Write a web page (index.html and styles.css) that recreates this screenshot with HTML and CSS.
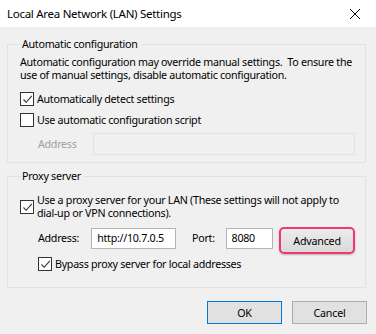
FILE: index.html
```html
<!DOCTYPE html>
<html>
    <head>
        <meta charset="utf-8">
        <title>Local Area Network (LAN) Settings</title>
        <link rel="stylesheet" href="styles.css">
    </head>
    <body>
        <div class="dialog">
            <div class="titlebar">
                <span class="title">Local Area Network (LAN) Settings</span>
                <svg class="close" width="12" height="12" viewBox="0 0 12 12">
                    <path d="M1 1 L11 11 M11 1 L1 11" stroke="#000" stroke-width="1" fill="none"/>
                </svg>
            </div>
            <div class="content">
                <!-- 자동 구성 -->
                <fieldset class="group group-auto">
                    <legend>Automatic configuration</legend>
                    <p class="desc">Automatic configuration may override manual settings.&nbsp; To ensure the<br>use of manual settings, disable automatic configuration.</p>
                    <label class="check row-detect"><span class="box checked"><svg width="11" height="11" viewBox="0 0 11 11"><path d="M1.5 5.5 L4.2 8.3 L9.8 1.8" stroke="#333" stroke-width="1.1" fill="none"/></svg></span>Automatically detect settings</label>
                    <label class="check row-script"><span class="box"></span>Use automatic configuration script</label>
                    <div class="field-row disabled">
                        <span class="field-label">Address</span>
                        <span class="input input-script"></span>
                    </div>
                </fieldset>
                <!-- 프록시 서버 -->
                <fieldset class="group group-proxy">
                    <legend>Proxy server</legend>
                    <label class="check check-multi"><span class="box checked"><svg width="11" height="11" viewBox="0 0 11 11"><path d="M1.5 5.5 L4.2 8.3 L9.8 1.8" stroke="#333" stroke-width="1.1" fill="none"/></svg></span><span>Use a proxy server for your LAN (These settings will not apply to<br>dial-up or VPN connections).</span></label>
                    <div class="proxy-row">
                        <span class="field-label">Address:</span>
                        <span class="input input-address">http://10.7.0.5</span>
                        <span class="field-label port-label">Port:</span>
                        <span class="input input-port">8080</span>
                        <button class="btn btn-advanced">Advanced</button>
                    </div>
                    <label class="check check-bypass"><span class="box checked"><svg width="11" height="11" viewBox="0 0 11 11"><path d="M1.5 5.5 L4.2 8.3 L9.8 1.8" stroke="#333" stroke-width="1.1" fill="none"/></svg></span>Bypass proxy server for local addresses</label>
                </fieldset>
                <div class="actions">
                    <button class="btn btn-ok">OK</button>
                    <button class="btn">Cancel</button>
                </div>
            </div>
        </div>
    </body>
</html>
```
FILE: styles.css
```css
body {
    margin: 0;
    font-family: "Noto Sans", "Open Sans", sans-serif;
    font-size: 10.7px;
    letter-spacing: -0.28px;
    color: #000;
    white-space: nowrap;
}
.dialog {
    width: 376px;
    height: 334px;
    background: #f0f0f0;
    overflow: hidden;
}
.titlebar {
    height: 27px;
    background: #fff;
    display: flex;
    align-items: center;
    justify-content: space-between;
    padding: 0 15px 0 7px;
    font-size: 11.5px;
    letter-spacing: -0.28px;
}
.close {
    margin-top: 1px;
}
.content {
    padding: 11px 10px 0 7px;
}
.group {
    margin: 0;
    border: 1px solid #e2e2e2;
    padding: 5px 10px 7px 12px;
    line-height: 13px;
    min-width: 0;
}
.group legend {
    padding: 0 3px 0 1px;
    margin-left: 1px;
    line-height: 13px;
}
.desc {
    margin: 0;
}
.check {
    display: flex;
    align-items: center;
    height: 14px;
}
.row-detect {
    margin-top: 10px;
}
.row-script {
    margin-top: 7px;
}
.box {
    width: 12px;
    height: 12px;
    border: 1px solid #333;
    background: #fff;
    margin-right: 3px;
    display: flex;
    align-items: center;
    justify-content: center;
    flex-shrink: 0;
}
.field-row {
    display: flex;
    align-items: center;
    margin-top: 6px;
    padding-left: 18px;
}
.disabled .field-label {
    color: #a0a0a0;
    width: 55px;
}
.input {
    display: block;
    box-sizing: border-box;
    height: 21px;
    border: 1px solid #b4b4b4;
    background: #fff;
    padding: 2px 5px;
    line-height: 14px;
}
.input-script {
    width: 262px;
    height: 22px;
    background: #f0f0f0;
    border-color: #e2e2e2;
}
.group-proxy {
    margin-top: 7px;
    padding-top: 11px;
    padding-bottom: 16px;
}
.check-multi {
    height: 26px;
}
.proxy-row {
    display: flex;
    align-items: flex-start;
    margin-top: 8px;
    padding-left: 18px;
}
.proxy-row .field-label {
    line-height: 21px;
    width: 54px;
}
.input-address {
    width: 86px;
}
.proxy-row .port-label {
    width: 34px;
    margin-left: 16px;
}
.input-port {
    width: 48px;
}
.btn {
    font-family: inherit;
    font-size: 10.7px;
    letter-spacing: -0.2px;
    box-sizing: border-box;
    width: 75px;
    height: 23px;
    background: #e1e1e1;
    border: 1px solid #adadad;
    padding: 0;
    color: #000;
}
.btn-advanced {
    width: 77px;
    height: 27px;
    margin-left: 6px;
    margin-top: -1px;
    border: 2px solid #f2386f;
    border-radius: 5px;
    background: linear-gradient(#ececec, #d9d9d9);
    box-shadow: 0 1px 2px rgba(0, 0, 0, 0.25);
}
.check-bypass {
    margin-top: 3px;
    margin-left: 18px;
}
.actions {
    display: flex;
    justify-content: flex-end;
    gap: 10px;
    margin-top: 13px;
    margin-right: -1px;
}
.btn-ok {
    border-color: #0078d7;
}
```
